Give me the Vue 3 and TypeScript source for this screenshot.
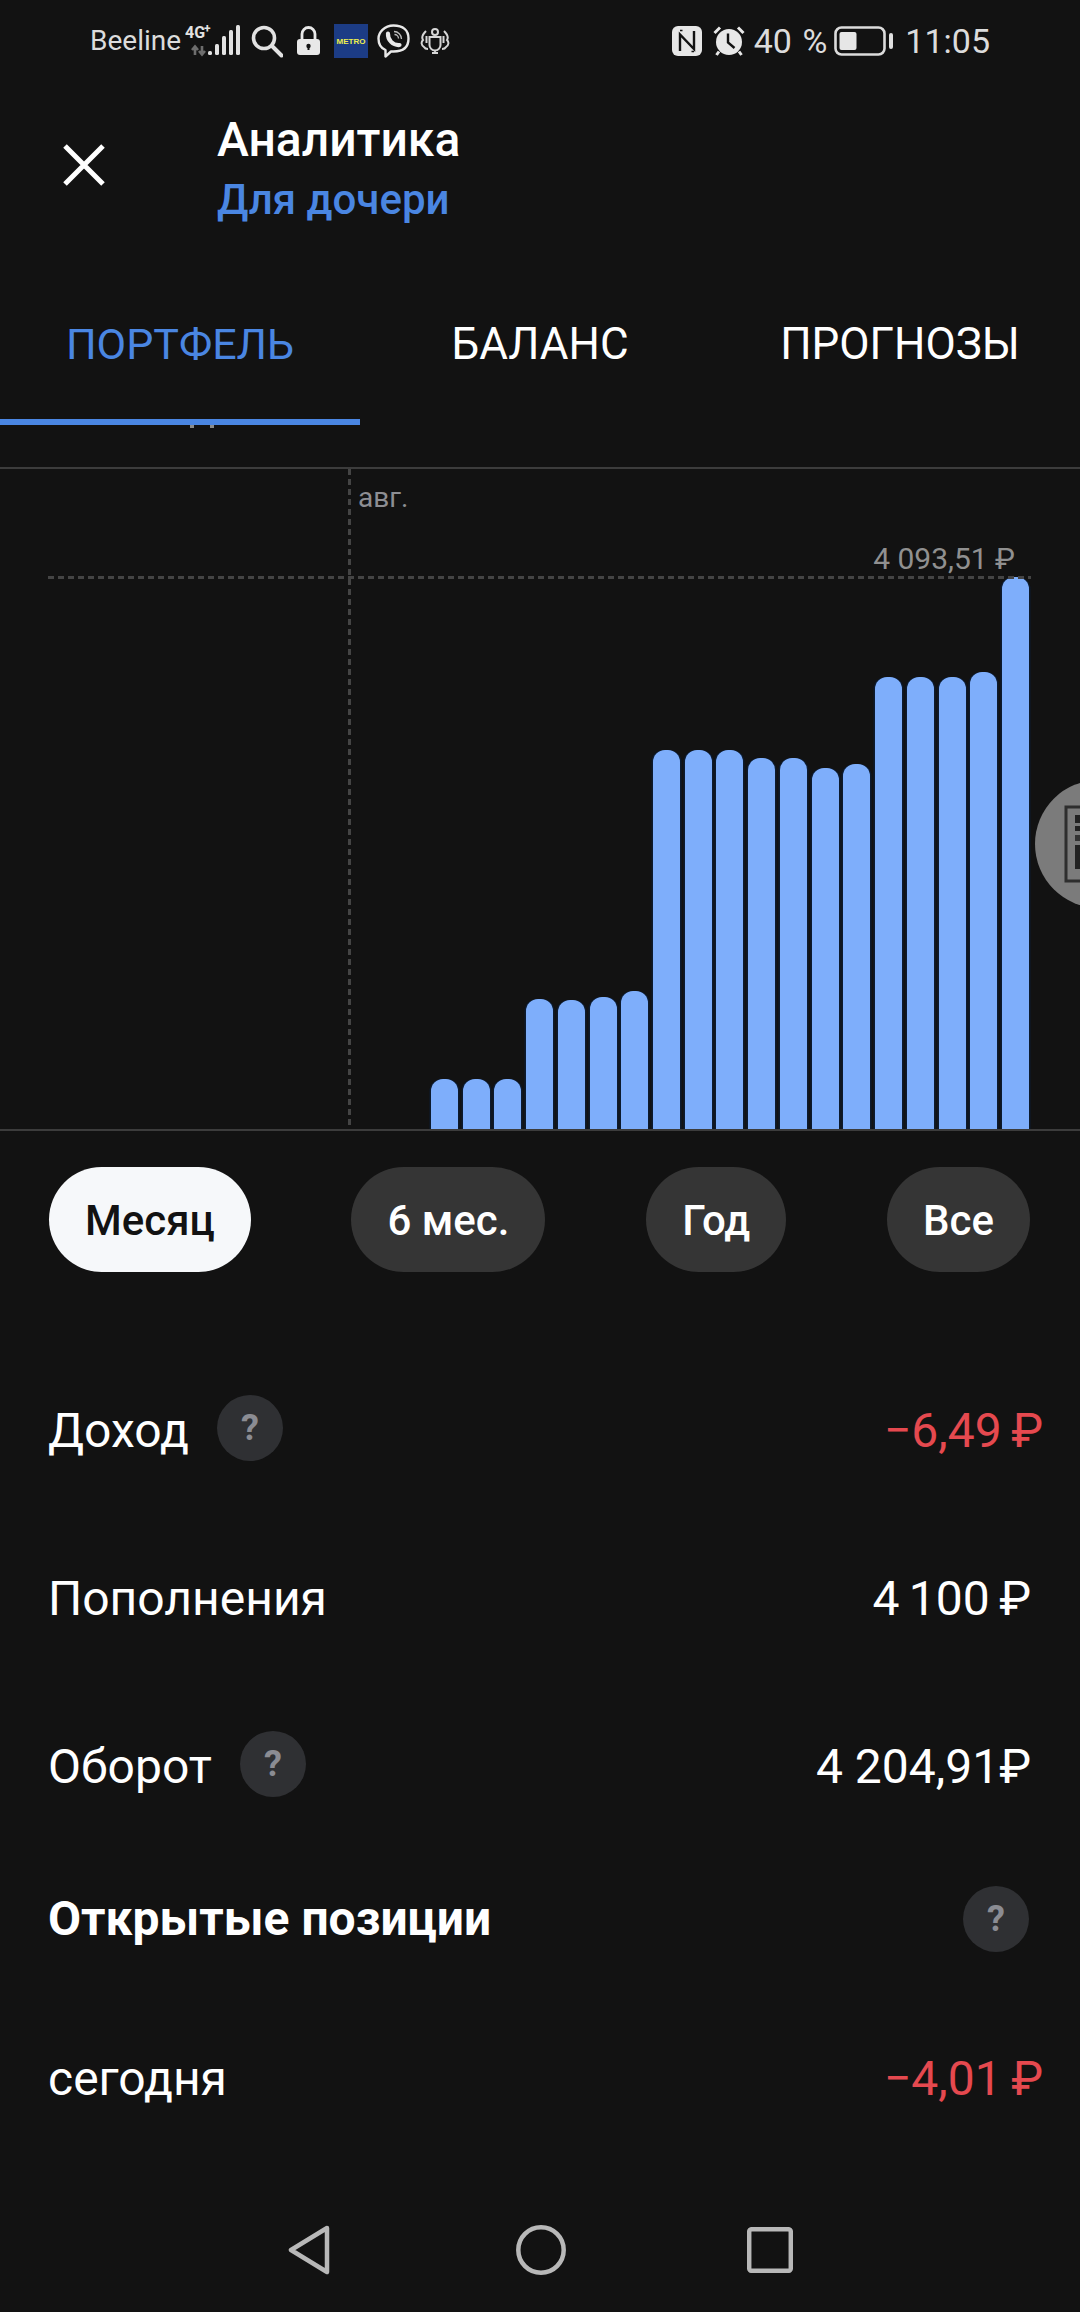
<script setup lang="ts">
const base = 1129
const tops: number[] = [1079, 1079, 1079, 999, 1000, 997, 991, 750, 750, 750, 758, 758, 768, 764, 677, 677, 677, 672, 577]
const bars = tops.map((t) => base - t)
const pills = [
  { label: 'Месяц', active: true },
  { label: '6 мес.', active: false },
  { label: 'Год', active: false },
  { label: 'Все', active: false },
]
const tabs = [
  { label: 'ПОРТФЕЛЬ', active: true },
  { label: 'БАЛАНС', active: false },
  { label: 'ПРОГНОЗЫ', active: false },
]
</script>

<template>
  <div class="page">
    <div class="status">
      <div class="status-group">
        <span class="carrier">Beeline</span>
        <svg class="net" width="56" height="36" viewBox="0 0 56 36">
          <text x="0" y="15" class="net-text">4G</text>
          <text x="19" y="10" class="net-plus">+</text>
          <path d="M10 32V24M7 27l3-3.500L13 27" stroke="#6d6d6d" stroke-width="2.600" fill="none" />
          <path d="M17 23v8M14 28l3 3.500L20 28" stroke="#6d6d6d" stroke-width="2.600" fill="none" />
          <rect x="23" y="28" width="4" height="4" rx="1.500" fill="#e2e2e2" />
          <rect x="30" y="21" width="4" height="11" rx="1.500" fill="#e2e2e2" />
          <rect x="37" y="13" width="4" height="19" rx="1.500" fill="#e2e2e2" />
          <rect x="44" y="7" width="4" height="25" rx="1.500" fill="#e2e2e2" />
          <rect x="51" y="2" width="4" height="30" rx="1.500" fill="#e2e2e2" />
        </svg>
        <svg class="search" width="32" height="36" viewBox="0 0 32 36">
          <circle cx="13" cy="15" r="10.500" fill="none" stroke="#e2e2e2" stroke-width="3.600" />
          <path d="M21 23l9.500 9.500" stroke="#e2e2e2" stroke-width="4" stroke-linecap="round" />
        </svg>
        <svg class="lock" width="23" height="36" viewBox="0 0 23 36">
          <path d="M5 17v-6a6.500 6.500 0 0 1 13 0v6" fill="none" stroke="#e8e8e8" stroke-width="2.800" />
          <rect x="0" y="16" width="23" height="16" rx="3" fill="#e8e8e8" />
          <circle cx="11.500" cy="23" r="2.200" fill="#121212" />
          <rect x="10.500" y="23" width="2" height="4" fill="#121212" />
        </svg>
        <svg class="metro" width="34" height="34" viewBox="0 0 34 34">
          <rect width="34" height="34" fill="#1c3c85" />
          <text x="17" y="19.500" text-anchor="middle" class="metro-text">METRO</text>
        </svg>
        <svg class="viber" width="33" height="34" viewBox="0 0 33 34">
          <path d="M16.500 1.500C26 1.500 31.500 6 31.500 14.500S26 27.500 16.500 27.500H14L8.500 32.500V26C3.500 24 1.500 20 1.500 14.500S7 1.500 16.500 1.500Z" fill="none" stroke="#e8e8e8" stroke-width="2.400" stroke-linejoin="round" />
          <path d="M11 9.500C10.500 16 16 21.500 22.500 21" fill="none" stroke="#e8e8e8" stroke-width="4.200" stroke-linecap="round" />
          <path d="M17 7.500a7.500 7.500 0 0 1 7.500 7.500M17.500 10.500a4 4 0 0 1 4 4" fill="none" stroke="#bdbdbd" stroke-width="1.300" />
        </svg>
        <svg class="crest" width="30" height="26" viewBox="0 0 30 26" fill="none" stroke="#d6d6d6" stroke-width="2">
          <circle cx="15" cy="4" r="3" />
          <path d="M9.500 9h11v8a5.500 5.500 0 0 1-11 0zM15 22.500V25M12 25h6" />
          <path d="M6 3C3 6 1 9 3 12c-2 2-2 5 1 7 1 2 3 2 4 2M24 3c3 3 5 6 3 9 2 2 2 5-1 7-1 2-3 2-4 2M6.500 8v7M23.500 8v7" />
        </svg>
      </div>
      <div class="status-group">
        <svg width="30" height="30" viewBox="0 0 30 30">
          <rect width="30" height="30" rx="6" fill="#e6e6e6" />
          <path d="M8 25V8.500L22 23V5" fill="none" stroke="#121212" stroke-width="2.400" />
          <path d="M10.500 4.500H8M19.500 25.500H22" stroke="#121212" stroke-width="1.600" />
        </svg>
        <svg class="alarm" width="32" height="30" viewBox="0 0 32 30">
          <circle cx="16" cy="16" r="13" fill="#e8e8e8" />
          <path d="M15 7.500V16.500L21.500 22" fill="none" stroke="#121212" stroke-width="2.400" />
          <path d="M1.500 7l5.500-5.500M30.500 7L25 1.500M6 25.500l-2.500 3.500M26 25.500l2.500 3.500" stroke="#e8e8e8" stroke-width="3" />
        </svg>
        <span class="status-text pct">40 %</span>
        <svg class="battery" width="59" height="30" viewBox="0 0 59 30">
          <rect x="1.500" y="1.500" width="49" height="27" rx="6" fill="none" stroke="#dcdcdc" stroke-width="2.600" />
          <rect x="5.500" y="6" width="17" height="18" rx="2" fill="#e6e6e6" />
          <rect x="55" y="7" width="4" height="16" rx="2" fill="#e0e0e0" />
        </svg>
        <span class="status-text time">11:05</span>
      </div>
    </div>

    <header class="header">
      <svg class="close" width="42" height="42" viewBox="0 0 42 42">
        <path d="M2 2l38 38M40 2L2 40" stroke="#fff" stroke-width="5" />
      </svg>
      <div class="titles">
        <div class="title">Аналитика</div>
        <div class="subtitle">Для дочери</div>
      </div>
    </header>

    <nav class="tabs">
      <div v-for="t in tabs" :key="t.label" class="tab" :class="{ 'tab-active': t.active }">{{ t.label }}</div>
    </nav>

    <section class="chart">
      <div class="bars">
        <div v-for="(h, i) in bars" :key="i" class="bar" :style="{ height: h + 'px' }"></div>
      </div>
      <div class="vline"></div>
      <div class="hline"></div>
      <span class="month">авг.</span>
      <span class="max">4 093,51 ₽</span>
      <div class="bubble">
        <svg width="30" height="78" viewBox="0 0 30 78">
          <path d="M30 2H2v74h28" fill="none" stroke="#2e2e2e" stroke-width="3" />
          <rect x="11" y="10" width="19" height="8" fill="#222" />
          <rect x="11" y="21" width="19" height="5" fill="#222" />
          <rect x="11" y="30" width="19" height="6" fill="#333" />
          <rect x="11" y="40" width="19" height="24" fill="#222" />
        </svg>
      </div>
    </section>

    <div class="pills">
      <button v-for="p in pills" :key="p.label" class="pill" :class="{ 'pill-active': p.active }">
        <span class="pill-text">{{ p.label }}</span>
      </button>
    </div>

    <div class="rows">
      <div class="row">
        <div class="row-label"><span>Доход</span><span class="help">?</span></div>
        <div class="value neg">−6,49 ₽</div>
      </div>
      <div class="row">
        <div class="row-label"><span>Пополнения</span></div>
        <div class="value tight">4 100 ₽</div>
      </div>
      <div class="row">
        <div class="row-label"><span>Оборот</span><span class="help">?</span></div>
        <div class="value">4 204,91₽</div>
      </div>
      <div class="row row-section">
        <div class="row-label section-title"><span>Открытые позиции</span></div>
        <span class="help">?</span>
      </div>
      <div class="row">
        <div class="row-label"><span>сегодня</span></div>
        <div class="value neg">−4,01 ₽</div>
      </div>
    </div>

    <footer class="navbar">
      <svg width="42" height="50" viewBox="0 0 42 50">
        <path d="M39 3L3 25l36 22z" fill="none" stroke="#b8b8b8" stroke-width="4.500" stroke-linejoin="round" />
      </svg>
      <svg class="nav-home" width="50" height="50" viewBox="0 0 50 50">
        <circle cx="25" cy="25" r="22.700" fill="none" stroke="#b8b8b8" stroke-width="4.500" />
      </svg>
      <svg class="nav-recent" width="46" height="46" viewBox="0 0 46 46">
        <rect x="2.200" y="2.200" width="41.600" height="41.600" rx="2.500" fill="none" stroke="#b8b8b8" stroke-width="4.500" />
      </svg>
    </footer>
  </div>
</template>

<style scoped>
.page {
  position: relative;
  display: flex;
  flex-direction: column;
  width: 1080px;
  height: 2312px;
  overflow: hidden;
  background: #121212;
  color: #fff;
  font-family: Roboto, "Noto Sans", sans-serif;
}
.status {
  display: flex;
  align-items: center;
  justify-content: space-between;
  height: 82px;
  padding: 0 90px 0 90px;
  color: #dcdcdc;
}
.status-group {
  display: flex;
  align-items: center;
}
.carrier {
  font-size: 28px;
  line-height: 36px;
}
.net { margin-left: 4px; }
.net-text { font: 700 16px Roboto, sans-serif; fill: #e2e2e2; }
.net-plus { font: 700 12px Roboto, sans-serif; fill: #e2e2e2; }
.search { margin-left: 10px; }
.lock { margin-left: 14px; }
.metro { margin-left: 14px; }
.metro-text { font: 700 8px "Liberation Sans", sans-serif; fill: #eef04e; }
.viber { margin-left: 9px; }
.crest { margin-left: 10px; }
.alarm { margin-left: 11px; }
.status-text {
  font-size: 34px;
  line-height: 36px;
}
.pct { margin-left: 9px; word-spacing: 2px; }
.battery { margin-left: 7px; }
.time { margin-left: 12px; }

.header {
  display: flex;
  align-items: flex-start;
  height: 186px;
  padding-left: 63px;
}
.close {
  flex: none;
  margin-top: 62px;
}
.titles {
  margin-left: 112px;
  padding-top: 28px;
}
.title {
  font-size: 48px;
  font-weight: 500;
  line-height: 60px;
}
.subtitle {
  font-size: 42px;
  font-weight: 500;
  line-height: 60px;
  color: #4a86e2;
}

.tabs {
  display: flex;
}
.tab {
  display: flex;
  flex: 0 0 360px;
  align-items: center;
  justify-content: center;
  box-sizing: border-box;
  height: 157px;
  padding-bottom: 6px;
  font-size: 44px;
}
.tab-active {
  position: relative;
  color: #4a86e2;
  font-size: 43px;
  border-bottom: 6px solid #4a86e2;
  padding-bottom: 0;
}
.tab-active::after {
  content: "";
  position: absolute;
  left: 190px;
  bottom: -9px;
  width: 24px;
  height: 3px;
  background: linear-gradient(90deg, #8a8a8a 0 4px, transparent 4px 20px, #8a8a8a 20px 24px);
}

.chart {
  position: relative;
  box-sizing: border-box;
  height: 664px;
  margin-top: 42px;
  border-top: 2px solid #3c3c3c;
  border-bottom: 2px solid #3c3c3c;
}
.bars {
  display: flex;
  align-items: flex-end;
  gap: 4.72px;
  height: 100%;
  padding-left: 431px;
  box-sizing: border-box;
}
.bar {
  flex: 0 0 27px;
  border-radius: 12px 12px 0 0;
  background: #7eaefb;
  box-shadow: 1.500px 0 0 #0c1a2e, -1.500px 0 0 #0c1a2e;
}
.vline {
  position: absolute;
  top: 0;
  bottom: 0;
  left: 348px;
  width: 3px;
  background: repeating-linear-gradient(180deg, #444 0 6px, transparent 6px 10px);
}
.hline {
  position: absolute;
  top: 107px;
  left: 48px;
  width: 983px;
  height: 3px;
  background: repeating-linear-gradient(90deg, #444 0 6px, transparent 6px 10px);
}
.month {
  position: absolute;
  top: 11px;
  left: 358px;
  font-size: 28px;
  line-height: 36px;
  color: #8d8e93;
}
.max {
  position: absolute;
  top: 71px;
  right: 65px;
  font-size: 30px;
  line-height: 38px;
  color: #909090;
}
.bubble {
  position: absolute;
  top: 311px;
  left: 1035px;
  display: flex;
  align-items: center;
  box-sizing: border-box;
  width: 128px;
  height: 128px;
  padding-left: 29px;
  border-radius: 50%;
  background: #7b7b7b;
}

.pills {
  display: flex;
  justify-content: space-between;
  margin-top: 36px;
  padding: 0 50px 0 49px;
}
.pill {
  height: 105px;
  padding: 2px 36px 0;
  border: none;
  border-radius: 53px;
  background: #353535;
  color: #fff;
  font-family: Roboto, "Noto Sans", sans-serif;
  font-size: 42px;
  font-weight: 500;
}
.pill-active {
  background: #f6f8fa;
  color: #121212;
}

.rows {
  display: flex;
  flex-direction: column;
  margin-top: 74px;
}
.row {
  display: flex;
  align-items: center;
  justify-content: space-between;
  box-sizing: border-box;
  height: 168px;
  padding: 2px 49px 0 48px;
  font-size: 48px;
  line-height: 56px;
}
.row-section {
  height: 138px;
  margin-bottom: 6px;
  padding: 0 51px 0 48px;
}
.row-label {
  display: flex;
  align-items: center;
  gap: 28px;
}
.section-title {
  font-weight: 700;
}
.help {
  display: flex;
  align-items: center;
  justify-content: center;
  width: 66px;
  height: 66px;
  margin-top: -6px;
  border-radius: 50%;
  background: #2f3033;
  color: #8b8c93;
  font-size: 36px;
  font-weight: 700;
  line-height: 1;
}
.row-section .help {
  margin-top: 0;
}
.value {
  white-space: nowrap;
}
.tight {
  word-spacing: -2.500px;
}
.neg {
  margin-right: -12px;
  word-spacing: -2.500px;
  color: #e5494f;
}

.navbar {
  position: absolute;
  left: 0;
  right: 0;
  bottom: 0;
  display: flex;
  align-items: center;
  height: 124px;
  padding-left: 288px;
}
.nav-home { margin-left: 186px; }
.nav-recent { margin-left: 181px; }
</style>
